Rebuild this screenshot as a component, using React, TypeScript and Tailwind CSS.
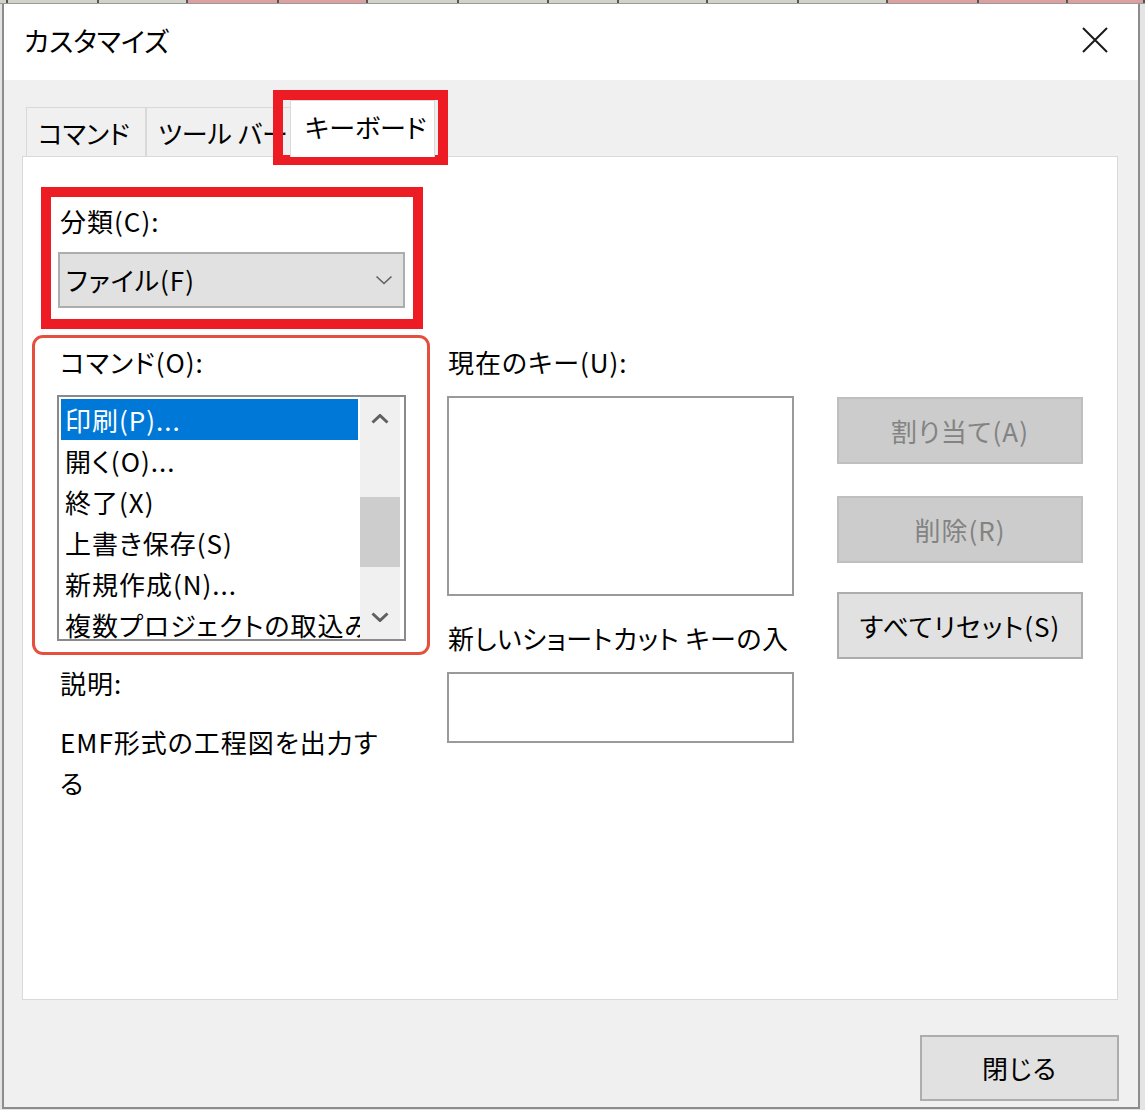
import React from 'react';

// background sheet visible above the dialog
const sheetCells = [
  { w: 8, pink: false },
  { w: 91, pink: false },
  { w: 89, pink: false },
  { w: 91, pink: true },
  { w: 89, pink: true },
  { w: 91, pink: false },
  { w: 90, pink: false },
  { w: 70, pink: false },
  { w: 89, pink: false },
  { w: 91, pink: false },
  { w: 89, pink: false },
  { w: 91, pink: true },
  { w: 89, pink: true },
  { w: 77, pink: true },
];

const commands = ['印刷(P)...', '開く(O)...', '終了(X)', '上書き保存(S)', '新規作成(N)...', '複数プロジェクトの取込み'];

function Chevron({ up = false, thin = false }: { up?: boolean; thin?: boolean }) {
  return (
    <svg width="18" height="10" viewBox="0 0 18 10" fill="none">
      <polyline
        points={up ? '1.5,8.5 9,1.5 16.5,8.5' : '1.5,1.5 9,8.5 16.5,1.5'}
        stroke="#606060"
        strokeWidth={thin ? 1.6 : 3}
        strokeLinejoin="miter"
      />
    </svg>
  );
}

function Tab({ label, width, selected = false }: { label: string; width: number; selected?: boolean }) {
  if (selected) {
    return (
      <div
        className="relative z-10 -ml-[2px] h-[57px] bg-white border border-b-0 border-[#d9d9d9] pt-[11px] pl-[14px] leading-[30px] tracking-normal whitespace-nowrap overflow-hidden"
        style={{ width }}
      >
        {label}
      </div>
    );
  }
  return (
    <div
      className="h-[50px] bg-[#f0f0f0] border border-b-0 border-[#d9d9d9] flex items-center pl-[11px] leading-[30px] tracking-normal whitespace-nowrap overflow-hidden"
      style={{ width }}
    >
      {label}
    </div>
  );
}

function DialogButton({ label, disabled = false, className = '' }: { label: string; disabled?: boolean; className?: string }) {
  return (
    <div
      className={
        'flex items-center justify-center border-2 leading-[30px] ' +
        (disabled ? 'bg-[#cccccc] border-[#bfbfbf] text-[#838383] ' : 'bg-[#e1e1e1] border-[#adadad] text-black ') +
        className
      }
    >
      {label}
    </div>
  );
}

function CommandList() {
  return (
    <div className="mt-[18px] w-[349px] h-[246px] border-2 border-[#8a8a8a] bg-white flex pr-[4px]">
      <div className="flex-1 p-[2px] overflow-hidden">
        {commands.map((c, i) => (
          <div
            key={c}
            className={
              'h-[41px] leading-[41px] pl-[4px] whitespace-nowrap ' + (i === 0 ? 'bg-[#0078d7] text-white' : 'text-black')
            }
          >
            {c}
          </div>
        ))}
      </div>
      <div className="w-[40px] bg-[#f0f0f0] flex flex-col">
        <div className="h-[44px] flex items-center justify-center">
          <Chevron up />
        </div>
        <div className="flex-1 pt-[56px]">
          <div className="h-[70px] bg-[#cdcdcd]" />
        </div>
        <div className="h-[44px] flex items-center justify-center">
          <Chevron />
        </div>
      </div>
    </div>
  );
}

export default function App() {
  return (
    <div className="relative w-[1145px] h-[1110px] overflow-hidden bg-[#e4e4e4] text-black text-[26px] tracking-[1px] font-['Noto_Sans_CJK_JP','Noto_Sans',sans-serif] [font-feature-settings:'palt']">
      <div className="flex h-[4px] border-b border-[#9a9a9a]">
        {sheetCells.map((c, i) => (
          <div
            key={i}
            className={'h-full shrink-0 border-r-2 border-[#555] ' + (c.pink ? 'bg-[#dca0a0]' : 'bg-[#d2d2c6]')}
            style={{ width: c.w }}
          />
        ))}
      </div>

      <div className="ml-[2px] w-[1138px] h-[1105px] border-2 border-t-0 border-[#8c8c8c] flex flex-col">
        {/* title bar */}
        <div className="h-[76px] bg-white flex items-center justify-between pl-[20px] pr-[30px]">
          <div className="text-[27px] tracking-normal leading-[36px] -mt-[2px]">カスタマイズ</div>
          <svg width="26" height="26" viewBox="0 0 26 26" className="-mt-[4px]">
            <path d="M1 1 L25 25 M25 1 L1 25" stroke="#1a1a1a" strokeWidth="2" />
          </svg>
        </div>

        {/* body */}
        <div className="flex-1 bg-[#f0f0f0] pl-[18px] pr-[20px] flex flex-col">
          <div className="mt-[20px] h-[57px] -mb-px flex items-end pl-[4px]">
            <Tab label="コマンド" width={120} />
            <Tab label="ツール バー" width={146} />
            <Tab label="キーボード" width={145} selected />
          </div>

          <div className="h-[844px] bg-white border border-[#d9d9d9] flex items-start pl-[34px]">
            {/* left column */}
            <div className="w-[349px] flex flex-col">
              <div className="mt-[49px] ml-[3px] leading-[30px]">分類(C):</div>
              <div className="mt-[16px] ml-[1px] w-[347px] h-[56px] bg-[#e1e1e1] border-2 border-[#adadad] flex items-center justify-between pl-[6px] pr-[10px]">
                <span className="leading-[30px]">ファイル(F)</span>
                <Chevron thin />
              </div>
              <div className="mt-[39px] ml-[3px] leading-[30px]">コマンド(O):</div>
              <CommandList />
              <div className="mt-[27px] ml-[3px] leading-[30px]">説明:</div>
              <div className="mt-[23px] ml-[3px] leading-[41px]">
                EMF形式の工程図を出力す
                <br />る
              </div>
            </div>

            {/* middle column */}
            <div className="ml-[41px] w-[347px] flex flex-col">
              <div className="mt-[190px] leading-[30px] ml-[1px]">現在のキー(U):</div>
              <div className="mt-[19px] h-[200px] border-2 border-[#9a9a9a] bg-white" />
              <div className="mt-[27px] leading-[30px] ml-[1px] whitespace-nowrap tracking-[0.5px]">新しいショートカット キーの入</div>
              <div className="mt-[19px] h-[71px] border-2 border-[#9a9a9a] bg-white" />
            </div>

            {/* right column */}
            <div className="ml-[43px] w-[246px] flex flex-col">
              <DialogButton label="割り当て(A)" disabled className="mt-[240px] h-[67px]" />
              <DialogButton label="削除(R)" disabled className="mt-[32px] h-[67px]" />
              <DialogButton label="すべてリセット(S)" className="mt-[29px] h-[67px]" />
            </div>
          </div>

          <div className="mt-[35px] flex justify-end">
            <DialogButton label="閉じる" className="w-[199px] h-[66px] -mr-px" />
          </div>
        </div>
      </div>

      {/* annotation boxes drawn over the dialog */}
      <div className="absolute left-[273px] top-[90px] w-[175px] h-[75px] border-[10px] border-[#ed1c24] pointer-events-none" />
      <div className="absolute left-[41px] top-[187px] w-[382px] h-[142px] border-[10px] border-[#ed1c24] pointer-events-none" />
      <div className="absolute left-[32px] top-[335px] w-[398px] h-[320px] border-[3px] border-[#e5503e] rounded-[11px] pointer-events-none" />
    </div>
  );
}
